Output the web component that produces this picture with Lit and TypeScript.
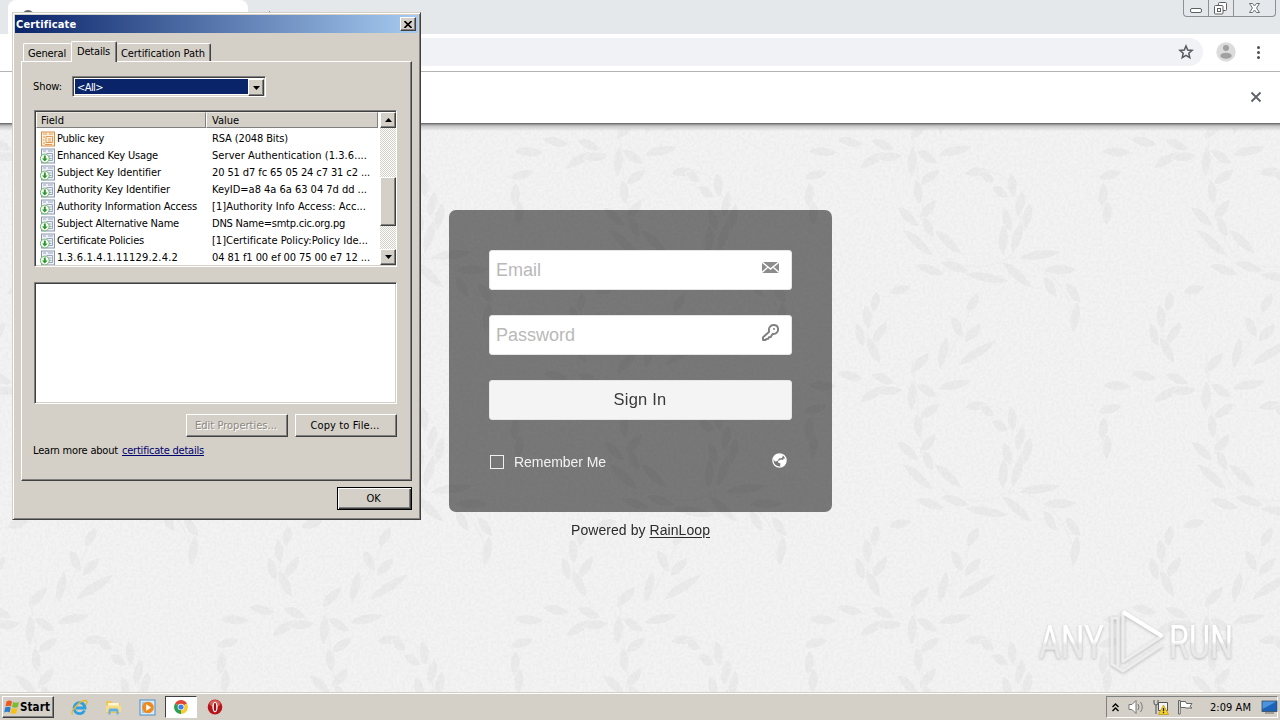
import { LitElement, html, css, svg } from 'lit';
import { customElement, property } from 'lit/decorators.js';

interface Field {
  icon: 'v1' | 'ext';
  name: string;
  nameWidth: number;
  value: string;
  valueWidth: number;
}

const FIELDS: Field[] = [
  { icon: 'v1', name: 'Public key', nameWidth: 47, value: 'RSA (2048 Bits)', valueWidth: 76 },
  { icon: 'ext', name: 'Enhanced Key Usage', nameWidth: 101, value: 'Server Authentication (1.3.6....', valueWidth: 155 },
  { icon: 'ext', name: 'Subject Key Identifier', nameWidth: 104, value: '20 51 d7 fc 65 05 24 c7 31 c2 ...', valueWidth: 158 },
  { icon: 'ext', name: 'Authority Key Identifier', nameWidth: 113, value: 'KeyID=a8 4a 6a 63 04 7d dd ...', valueWidth: 155 },
  { icon: 'ext', name: 'Authority Information Access', nameWidth: 140, value: '[1]Authority Info Access: Acc...', valueWidth: 154 },
  { icon: 'ext', name: 'Subject Alternative Name', nameWidth: 122, value: 'DNS Name=smtp.cic.org.pg', valueWidth: 133 },
  { icon: 'ext', name: 'Certificate Policies', nameWidth: 87, value: '[1]Certificate Policy:Policy Ide...', valueWidth: 156 },
  { icon: 'ext', name: '1.3.6.1.4.1.11129.2.4.2', nameWidth: 121, value: '04 81 f1 00 ef 00 75 00 e7 12 ...', valueWidth: 158 },
];

// x, y, length, angle of every leaf in one wallpaper tile
const LEAVES: number[][] = [
  [10, 18, 28, 10], [33, 36, 32, -35], [43, 21, 26, 20], [50, 33, 26, -10], [72, 38, 32, 90],
  [115, 27, 36, -15], [87, 33, 26, 30], [90, 53, 26, -40], [78, 68, 26, 80], [137, 48, 26, -10],
  [147, 53, 18, 30], [160, 68, 20, 30], [172, 61, 26, 80], [180, 80, 28, 100], [187, 93, 30, 100],
  [167, 96, 26, 70], [163, 116, 32, 90], [177, 113, 36, 105], [68, 93, 30, 40], [88, 86, 28, -55],
  [78, 119, 42, 40], [88, 103, 24, 60], [108, 118, 38, 40], [90, 146, 32, 15], [115, 143, 32, 15],
  [147, 154, 46, 8], [177, 151, 42, 40], [200, 131, 46, -10], [220, 146, 36, -3], [210, 163, 26, 55],
  [233, 169, 26, 50], [235, 193, 32, 95], [27, 193, 26, 80], [35, 178, 22, 95], [20, 211, 26, 70],
  [40, 209, 28, -60], [33, 226, 32, 60], [60, 166, 24, -20], [133, 179, 24, -65], [117, 203, 26, 60],
  [133, 209, 26, -50], [103, 229, 34, 100], [137, 229, 48, -35], [80, 239, 30, -50], [277, 28, 30, 0],
  [270, 51, 26, -20], [263, 71, 26, 90], [267, 89, 26, 90],
];

const TILE_X = [-336, -42, 252, 546, 840, 1134];
const TILE_Y = [-234, 0, 234, 468];

/**
 * Single line of text spaced out to an exact width
 */
@customElement('fit-text')
export class FitText extends LitElement {
  @property({ type: Number }) width = 0;

  static styles = css`
    :host {
      display: inline-block;
      white-space: pre;
    }
  `;

  render() {
    return html`<slot></slot>`;
  }

  firstUpdated() {
    const count = (this.textContent ?? '').length;
    const natural = this.getBoundingClientRect().width;
    if (count && this.width) {
      this.style.letterSpacing = `${(this.width - natural) / count}px`;
    }
  }
}

@customElement('mail-page')
export class MailPage extends LitElement {
  static styles = css`
    :host {
      display: block;
      position: relative;
      overflow: hidden;
      background: #f3f3f3;
      font-family: 'Liberation Sans', Arial, sans-serif;
    }

    .wallpaper {
      position: absolute;
      inset: 0;
    }

    .top-shadow {
      position: absolute;
      inset: 0 0 auto;
      height: 7px;
      background: linear-gradient(#8a8a8a, #c9c9c9 30%, rgba(240, 240, 240, 0));
    }

    .content {
      position: relative;
      display: flex;
      flex-direction: column;
      align-items: center;
      padding: 86px 0 0 1px;
    }

    .card {
      box-sizing: border-box;
      width: 383px;
      height: 302px;
      padding: 40px;
      border-radius: 7px;
      background: rgba(0, 0, 0, 0.505);
      display: flex;
      flex-direction: column;
      gap: 25px;
    }

    .field,
    .submit {
      box-sizing: border-box;
      height: 40px;
      border-radius: 3px;
      background: #fff;
      border: 1px solid #e6e6e6;
      display: flex;
      align-items: center;
      justify-content: space-between;
      padding: 0 12px 0 6px;
      font-size: 18px;
      color: #b9b9b9;
    }

    .field svg {
      margin-top: -5px;
    }

    .submit {
      justify-content: center;
      padding: 0 1px 2px 0;
      background: #f4f4f4;
      font-size: 16.5px;
      color: #3a3a3a;
    }

    .remember {
      display: flex;
      align-items: center;
      margin-top: 9px;
      height: 16px;
      padding: 0 5px 0 1px;
      font-size: 14px;
      color: #f2f2f2;
    }

    .box {
      box-sizing: border-box;
      width: 14px;
      height: 14px;
      border: 1px solid #f0f0f0;
      margin-right: 10px;
    }

    .globe {
      margin: -4px 0 0 auto;
    }

    .powered {
      margin-top: 10px;
      font-size: 14px;
      line-height: 16px;
      color: #2b2b2b;
    }

    .powered u {
      text-underline-offset: 2px;
    }

    .watermark {
      position: absolute;
      right: 38px;
      bottom: 12px;
    }
  `;

  private renderWallpaper() {
    return svg`
      <svg class="wallpaper" width="1280" height="568">
        <defs>
          <filter id="grain" x="0" y="0" width="100%" height="100%">
            <feTurbulence type="fractalNoise" baseFrequency="0.35" numOctaves="3" seed="4" />
            <feColorMatrix values="0 0 0 0 0.5  0 0 0 0 0.5  0 0 0 0 0.5  0.5 0 0 0 -0.18" />
          </filter>
          <g id="tile">
            <path d="M72 0c4 30 6 80 20 118 14 26 50 32 76 16 20-20 14-52 4-72-8-12-20-16-34-14M168 134c30 0 56 20 66 60M34 234c-8-20-10-40 2-58M108 234c8-20 22-40 24-56" fill="none" stroke="#ebebeb" stroke-width="1.2" />
            ${LEAVES.map(
              ([x, y, l, a]) => svg`
                <path transform="translate(${x} ${y}) rotate(${a})" d="M${-l / 2} 0Q${-l / 6} -11 ${l / 2} 0Q${l / 8} 10 ${-l / 2} 0Z" fill="#e6e6e6" stroke="#f8f8f8" stroke-width="0.7" />`
            )}
          </g>
        </defs>
        <g opacity="0.6">
          ${TILE_X.map((x) => TILE_Y.map((y) => svg`<use href="#tile" x=${x} y=${y} />`))}
        </g>
        <rect width="1280" height="568" filter="url(#grain)" opacity="0.45" />
      </svg>
    `;
  }

  private renderWatermark() {
    return html`
      <svg class="watermark" width="208" height="76" viewBox="0 0 208 76">
        <defs>
          <linearGradient id="shine" x1="0" y1="0" x2="0" y2="1">
            <stop offset="0.48" stop-color="#fff" />
            <stop offset="0.55" stop-color="#e9e9e9" />
          </linearGradient>
          <filter id="soft" x="-10%" y="-10%" width="120%" height="120%">
            <feDropShadow dx="0" dy="1" stdDeviation="1.6" flood-color="#888" flood-opacity="0.55" />
          </filter>
        </defs>
        <g filter="url(#soft)">
          <g font-family="Roboto, sans-serif" font-size="47" fill="url(#shine)">
            <text transform="translate(5 54) scale(0.71 1)">ANY</text>
            <text transform="translate(135 54) scale(0.69 1)">RUN</text>
          </g>
          <g fill="none" stroke="#ededed" stroke-width="3">
            <path d="M89 58V8L128 32L88 58" />
            <path d="M84 62V14H78V60L89 67L128 41" />
            <path d="M89 8L128 32" stroke="#fff" stroke-width="4" />
          </g>
        </g>
      </svg>
    `;
  }

  render() {
    return html`
      ${this.renderWallpaper()}
      <div class="top-shadow"></div>
      <div class="content">
        <div class="card">
          <div class="field">
            <span>Email</span>
            <svg width="17" height="17" viewBox="0 0 17 17">
              <path d="M0 3h17v11H0z" fill="#8c8c8c" />
              <path d="M0 3l8.5 7L17 3M0 13.5l6-5.5M17 13.5L11 8" fill="none" stroke="#fff" stroke-width="1.4" />
            </svg>
          </div>
          <div class="field">
            <span>Password</span>
            <svg width="17" height="17" viewBox="0 0 17 17" fill="none" stroke="#808080" stroke-width="1.9">
              <path d="M7.200 7.800C6 4 8.500 1 11.500 1c2.800 0 4.600 1.800 4.600 4.300 0 3.200-2.800 5.200-5.300 4.500L9.600 11.300l-.8 1.700-2 .2-.5 1.600-1.800.2-1 1H1v-2.700z" stroke-linejoin="round" />
              <circle cx="12" cy="5" r="1" fill="#808080" stroke="none" />
            </svg>
          </div>
          <div class="submit"><fit-text width="53">Sign In</fit-text></div>
          <div class="remember">
            <span class="box"></span>
            <fit-text width="92">Remember Me</fit-text>
            <svg class="globe" width="15" height="15" viewBox="0 0 15 15">
              <circle cx="7.500" cy="7.500" r="6.600" fill="none" stroke="#fff" stroke-width="1.300" />
              <path d="M4 1.500L8 1l3 1.500-1 2.500-3 .5L5.500 8 3 8.500 1 6z" fill="#fff" />
              <path d="M6 8l3-1.500 2 .5 1-2 2 2-.5 3.500-3 3L8 13l.5-2.500L6 9.500z" fill="#fff" />
            </svg>
          </div>
        </div>
        <div class="powered"><fit-text width="139">Powered by <u>RainLoop</u></fit-text></div>
      </div>
      ${this.renderWatermark()}
    `;
  }
}

@customElement('browser-chrome')
export class BrowserChrome extends LitElement {
  static styles = css`
    :host {
      display: block;
    }

    .tab-strip {
      display: flex;
      justify-content: space-between;
      height: 34px;
      background: #e5e8eb;
      padding: 0 4px 0 8px;
    }

    .tab {
      box-sizing: border-box;
      width: 240px;
      height: 34px;
      border-radius: 8px 8px 0 0;
      background: #fff;
      padding: 10px 0 0 14px;
    }

    .favicon {
      width: 12px;
      height: 12px;
      border-radius: 6px;
      background: #5f6368;
    }

    .plus {
      width: 1px;
      height: 12px;
      margin: 11px auto 0 21px;
      background: #8b8f94;
    }

    .controls {
      box-sizing: border-box;
      display: flex;
      width: 93px;
      height: 17px;
      border: 1px solid #8d9094;
      border-top: none;
      border-radius: 0 0 4px 4px;
    }

    .toolbar {
      box-sizing: border-box;
      display: flex;
      align-items: center;
      height: 38px;
      background: #fff;
      border-bottom: 1px solid #b4b4b4;
      padding: 0 13px 1px 20px;
    }

    .omnibox {
      display: flex;
      flex: 1;
      align-items: center;
      justify-content: flex-end;
      height: 28px;
      border-radius: 14px;
      background: #f0f2f5;
      padding-right: 9px;
      margin-right: 13px;
    }

    .avatar {
      margin-right: 15px;
    }

    .infobar {
      box-sizing: border-box;
      display: flex;
      align-items: center;
      justify-content: flex-end;
      height: 52px;
      background: #fff;
      border-bottom: 1px solid #707070;
      padding: 0 18px 1px 0;
    }
  `;

  render() {
    return html`
      <div class="tab-strip">
        <div class="tab"><div class="favicon"></div></div>
        <div class="plus"></div>
        <div class="controls">
          <svg width="91" height="16" viewBox="0 0 91 16" fill="none" stroke="#5c6063">
            <path d="M24.500 0v16M49.500 0v16" stroke="#8d9094" />
            <rect x="6.500" y="8.500" width="11" height="4" rx="1.500" fill="#fff" />
            <rect x="34.500" y="2.500" width="8" height="8" rx="1" fill="#fff" />
            <rect x="30.500" y="5.500" width="8.500" height="8.500" rx="1" fill="#fff" />
            <rect x="33.500" y="8.500" width="3" height="3" />
            <path d="M65.500 3.500h3l2 2.500 2-2.500h3L72.500 8l3 4.500h-3l-2-2.500-2 2.500h-3l3-4.500z" fill="#fff" stroke-width="0.900" />
          </svg>
        </div>
      </div>
      <div class="toolbar">
        <div class="omnibox">
          <svg width="16" height="16" viewBox="0 0 16 16" fill="none" stroke="#55595e" stroke-width="1.500">
            <path d="M8 2l1.700 4 4.400.4-3.300 2.900 1 4.300L8 11.300l-3.800 2.300 1-4.300L1.900 6.400 6.300 6z" />
          </svg>
        </div>
        <svg class="avatar" width="20" height="20" viewBox="0 0 20 20">
          <circle cx="10" cy="10" r="9.700" fill="#dcdcdc" />
          <circle cx="10" cy="6" r="3" fill="#a0a0a0" />
          <ellipse cx="10" cy="13.700" rx="5.700" ry="3" fill="#a0a0a0" />
        </svg>
        <svg width="16" height="16" viewBox="0 0 16 16" fill="#4c5054">
          <circle cx="7.500" cy="3.500" r="1.500" />
          <circle cx="7.500" cy="8.500" r="1.500" />
          <circle cx="7.500" cy="13.500" r="1.500" />
        </svg>
      </div>
      <div class="infobar">
        <svg width="12" height="12" viewBox="0 0 12 12" stroke="#5f6368" stroke-width="1.900">
          <path d="M1.500 1.500l9 9M10.500 1.500l-9 9" />
        </svg>
      </div>
    `;
  }
}

@customElement('certificate-dialog')
export class CertificateDialog extends LitElement {
  static styles = css`
    :host {
      box-sizing: border-box;
      display: flex;
      flex-direction: column;
      width: 409px;
      height: 508px;
      padding: 1px;
      border: 1px solid;
      border-color: #d4d0c8 #404040 #404040 #d4d0c8;
      box-shadow: inset 1px 1px #fff, inset -1px -1px #808080;
      background: #d4d0c8;
      font-family: 'DejaVu Sans Condensed', 'DejaVu Sans', sans-serif;
      font-size: 11px;
      line-height: 13px;
      color: #000;
    }

    .title {
      display: flex;
      align-items: center;
      justify-content: space-between;
      height: 18px;
      margin: 1px 1px 0;
      padding: 0 2px 0 1px;
      background: linear-gradient(90deg, #0a246a, #a6caf0);
      color: #fff;
      font-weight: bold;
      font-size: 11px;
    }

    .close,
    .arrow,
    .button,
    .thumb {
      box-sizing: border-box;
      display: flex;
      align-items: center;
      justify-content: center;
      background: #d4d0c8;
      border: 1px solid;
      border-color: #fff #404040 #404040 #fff;
      box-shadow: inset -1px -1px #808080;
    }

    .close {
      width: 16px;
      height: 14px;
    }

    .tabs {
      display: flex;
      align-items: flex-end;
      height: 21px;
      margin: 7px 0 0 9px;
    }

    .tab {
      box-sizing: border-box;
      height: 18px;
      padding: 3px 4px 0;
      border: 1px solid #fff;
      border-bottom: none;
      border-radius: 2px 2px 0 0;
    }

    .general {
      width: 48px;
      border-right: none;
    }

    .details {
      width: 46px;
      height: 21px;
      margin-bottom: -1px;
      border-right: 1px solid #404040;
      box-shadow: inset -1px 0 #808080;
      background: #d4d0c8;
      z-index: 1;
      padding-left: 5px;
    }

    .path {
      width: 94px;
      border-left: none;
      border-right: 1px solid #404040;
      box-shadow: inset -1px 0 #808080;
    }

    .panel {
      box-sizing: border-box;
      width: 391px;
      height: 420px;
      margin-left: 7px;
      border: 1px solid;
      border-color: #fff #404040 #404040 #fff;
      box-shadow: inset -1px -1px #808080;
      padding: 14px 14px 0 12px;
    }

    .show {
      display: flex;
      align-items: center;
      height: 21px;
      margin-left: -1px;
    }

    .sunken {
      box-sizing: border-box;
      border: 1px solid;
      border-color: #808080 #fff #fff #808080;
      box-shadow: inset 1px 1px #404040, inset -1px -1px #d4d0c8;
      background: #fff;
    }

    .select {
      display: flex;
      width: 194px;
      height: 21px;
      padding: 2px 1px 2px 2px;
      margin-left: 10px;
    }

    .selected {
      flex: 1;
      padding: 2px 0 0 2px;
      background: #0a246a;
      color: #fff;
    }

    .select .arrow {
      width: 16px;
      height: 17px;
    }

    .list {
      display: flex;
      width: 363px;
      height: 157px;
      margin-top: 13px;
      padding: 1px 0 1px 1px;
      overflow: hidden;
    }

    .columns {
      width: 342px;
      flex: none;
      overflow: hidden;
    }

    .head {
      display: flex;
      height: 16px;
    }

    .head div {
      box-sizing: border-box;
      padding: 1px 0 0 4px;
      background: #d4d0c8;
      border: 1px solid;
      border-color: #e8e6e0 #808080 #808080 #fff;
      width: 170px;
      line-height: 14px;
    }

    .head div + div {
      width: 172px;
      padding-left: 5px;
    }

    .row {
      display: flex;
      align-items: center;
      height: 17px;
      padding-left: 4px;
    }

    .row:nth-child(2) {
      margin-top: 2px;
    }

    .name {
      width: 155px;
      padding-left: 1px;
    }

    .scroll {
      display: flex;
      flex-direction: column;
      flex: none;
      width: 16px;
      margin: 0 0 0 auto;
      background: repeating-conic-gradient(#fff 0 25%, #d4d0c8 0 50%) 0 0 / 2px 2px;
    }

    .scroll .arrow {
      width: 16px;
      height: 16px;
    }

    .thumb {
      height: 49px;
      margin: 49px 0 auto;
    }

    .text {
      width: 363px;
      height: 122px;
      margin-top: 15px;
    }

    .buttons {
      display: flex;
      justify-content: flex-end;
      gap: 7px;
      margin-top: 10px;
    }

    .button {
      width: 102px;
      height: 23px;
      padding-right: 2px;
    }

    .disabled {
      color: #8c8880;
      text-shadow: 1px 1px #fff;
    }

    .more {
      margin: 7px 0 0 -1px;
      display: flex;
      gap: 4px;
    }

    .more fit-text + fit-text {
      color: #00006e;
      text-decoration: underline;
    }

    .ok {
      width: 75px;
      margin: 6px 7px 0 auto;
      border-color: #000;
      box-shadow: inset 1px 1px #fff, inset -1px -1px #404040, inset -2px -2px #808080;
    }
  `;

  private renderArrow(down: boolean) {
    return html`
      <svg width="7" height="4" viewBox="0 0 7 4">
        <path d=${down ? 'M0 0h7L3.500 4z' : 'M0 4h7L3.500 0z'} />
      </svg>
    `;
  }

  private renderIcon(kind: Field['icon']) {
    if (kind === 'v1') {
      return html`
        <svg width="16" height="16" viewBox="0 0 16 16">
          <rect x="1.500" y="1" width="13" height="14" fill="#fdeed8" stroke="#d98a45" />
          <path d="M3 3h4M9 3h4M3 6h2M6 5.500h6.500v6H6zM8 8h3M8 10h3M3 9h1.500M3 12h2M5 13.500h7" fill="none" stroke="#df9a58" />
        </svg>
      `;
    }
    return html`
      <svg width="16" height="16" viewBox="0 0 16 16">
        <rect x="1.500" y="1" width="13" height="14" fill="#eef1f8" stroke="#8b97ad" />
        <path d="M3 3h3M8 3h5M6.500 5.500h6v7h-6M8 8h3.500M8 10.500h3.500" fill="none" stroke="#9ba6be" />
        <circle cx="4.800" cy="10.500" r="4.400" fill="#fff" stroke="#5fae5c" stroke-width="0.900" />
        <path d="M3.800 7.500h2v3h1.900l-2.900 3-2.900-3h1.900z" fill="#2c9a2a" />
      </svg>
    `;
  }

  render() {
    return html`
      <div class="title">
        <fit-text width="60">Certificate</fit-text>
        <div class="close">
          <svg width="8" height="7" viewBox="0 0 8 7" stroke="#000" stroke-width="1.600">
            <path d="M0.500 0l7 7M7.500 0l-7 7" />
          </svg>
        </div>
      </div>
      <div class="tabs">
        <div class="tab general"><fit-text width="38">General</fit-text></div>
        <div class="tab details"><fit-text width="33">Details</fit-text></div>
        <div class="tab path"><fit-text width="84">Certification Path</fit-text></div>
      </div>
      <div class="panel">
        <div class="show">
          <fit-text width="29">Show:</fit-text>
          <div class="sunken select">
            <div class="selected"><fit-text width="26">&lt;All&gt;</fit-text></div>
            <div class="arrow">${this.renderArrow(true)}</div>
          </div>
        </div>
        <div class="sunken list">
          <div class="columns">
            <div class="head">
              <div><fit-text width="23">Field</fit-text></div>
              <div><fit-text width="27">Value</fit-text></div>
            </div>
            ${FIELDS.map(
              (f) => html`
                <div class="row">
                  ${this.renderIcon(f.icon)}
                  <div class="name"><fit-text width=${f.nameWidth}>${f.name}</fit-text></div>
                  <fit-text width=${f.valueWidth}>${f.value}</fit-text>
                </div>
              `
            )}
          </div>
          <div class="scroll">
            <div class="arrow">${this.renderArrow(false)}</div>
            <div class="thumb"></div>
            <div class="arrow">${this.renderArrow(true)}</div>
          </div>
        </div>
        <div class="sunken text"></div>
        <div class="buttons">
          <div class="button disabled"><fit-text width="82">Edit Properties...</fit-text></div>
          <div class="button"><fit-text width="69">Copy to File...</fit-text></div>
        </div>
        <div class="more">
          <fit-text width="85">Learn more about</fit-text>
          <fit-text width="82">certificate details</fit-text>
        </div>
      </div>
      <div class="button ok"><fit-text width="14">OK</fit-text></div>
    `;
  }
}

@customElement('task-bar')
export class TaskBar extends LitElement {
  static styles = css`
    :host {
      box-sizing: border-box;
      display: flex;
      align-items: center;
      height: 28px;
      padding: 2px 2px 0 2px;
      background: #d4d0c8;
      box-shadow: inset 0 1px #d4d0c8, inset 0 2px #fff;
      font-family: 'DejaVu Sans Condensed', 'DejaVu Sans', sans-serif;
      font-size: 11px;
      color: #000;
    }

    .start {
      box-sizing: border-box;
      display: flex;
      align-items: center;
      width: 52px;
      height: 22px;
      padding-left: 1px;
      border: 1px solid;
      border-color: #fff #404040 #404040 #fff;
      box-shadow: inset -1px -1px #808080;
      font-weight: bold;
      font-size: 11.5px;
    }

    .launch {
      display: flex;
      align-items: center;
      margin-left: 8px;
    }

    .item {
      box-sizing: border-box;
      display: flex;
      align-items: center;
      justify-content: center;
      width: 34px;
      height: 22px;
    }

    .active {
      width: 32px;
      margin: 0 1px;
      background: #fff;
      border: 1px solid;
      border-color: #404040 #fff #fff #404040;
    }

    .tray {
      box-sizing: border-box;
      display: flex;
      align-items: center;
      gap: 8px;
      width: 172px;
      height: 22px;
      margin-left: auto;
      padding: 0 0 0 5px;
      border: 1px solid;
      border-color: #808080 #fff #fff #808080;
    }

    .tray svg {
      flex: none;
    }

    .speaker {
      margin-left: 1px;
    }

    .clock {
      margin: 0 2px 0 9px;
    }
  `;

  render() {
    return html`
      <div class="start">
        <svg width="16" height="16" viewBox="0 0 16 16">
          <path d="M2.500 2.500q3-2 5.500 0L7 7.500q-2.500-1.500-5.500 0z" fill="#ea5b21" />
          <path d="M9 3q3 1.500 6 0l-1.200 5q-3 1.500-5.800 0z" fill="#7cbb36" />
          <path d="M1.200 8.500q3-1.500 5.500 0l-1 5q-2.500-1.700-5.500 0z" fill="#2d7ed3" />
          <path d="M7.700 9q3 1.500 5.800 0l-1.200 5q-3 1.700-5.700 0z" fill="#f9c111" />
        </svg>
        <fit-text width="30">Start</fit-text>
      </div>
      <div class="launch">
        <div class="item">
          <svg width="17" height="17" viewBox="0 0 17 17" fill="none">
            <path d="M13.500 11.500A5.500 5.500 0 1 1 14 9H5" stroke="#2f9fe0" stroke-width="2.800" />
            <path d="M1.500 15.500C-1 12 9 1.500 14.500 1.500c2 0 2 2 .5 4.500" stroke="#e9b72c" stroke-width="1.300" />
          </svg>
        </div>
        <div class="item">
          <svg width="17" height="17" viewBox="0 0 17 17">
            <path d="M1 2h6l1 2h7v10H1z" fill="#edc55a" />
            <path d="M3 4h11v4H3z" fill="#fff6cf" />
            <path d="M1 6.500h15V13H1z" fill="#f5dc86" />
            <path d="M3.500 15.500v-4q0-2 2-2h6q2 0 2 2v4h-2v-3h-6v3z" fill="#62aee0" />
          </svg>
        </div>
        <div class="item">
          <svg width="17" height="17" viewBox="0 0 17 17">
            <rect x="1" y="1" width="15" height="15" fill="#d8eaf8" stroke="#4b8fc8" />
            <rect x="3" y="3" width="9" height="11" fill="#9cc8ea" />
            <circle cx="9" cy="8.500" r="5.800" fill="#f08a1d" />
            <path d="M7.200 5.300v6.400l5-3.200z" fill="#fff" />
          </svg>
        </div>
        <div class="item active">
          <svg width="14" height="14" viewBox="0 0 14 14">
            <path d="M7 7L1 3.500A7 7 0 0 1 13 3.500z" fill="#df4637" />
            <path d="M7 7L13 3.500A7 7 0 0 1 7 14z" fill="#f8cb2e" />
            <path d="M7 7v7A7 7 0 0 1 1 3.500z" fill="#2e9e52" />
            <circle cx="7" cy="7" r="3.300" fill="#fff" />
            <circle cx="7" cy="7" r="2.600" fill="#3f7ee8" />
          </svg>
        </div>
        <div class="item">
          <svg width="16" height="16" viewBox="0 0 16 16">
            <ellipse cx="8" cy="8" rx="7.300" ry="7.600" fill="#b8141b" />
            <ellipse cx="8" cy="4.500" rx="5.500" ry="3.500" fill="#d85a55" />
            <ellipse cx="8" cy="8" rx="2.600" ry="5.300" fill="#fff" />
            <ellipse cx="8" cy="8" rx="1.200" ry="4.300" fill="#9c1015" />
          </svg>
        </div>
      </div>
      <div class="tray">
        <svg width="7" height="9" viewBox="0 0 7 9" fill="none" stroke="#000" stroke-width="1.400">
          <path d="M0.500 4l3-3 3 3M0.500 8l3-3 3 3" />
        </svg>
        <svg class="speaker" width="17" height="16" viewBox="0 0 17 16" fill="none" stroke="#777">
          <path d="M1 5.500h3l4-4v13l-4-4H1z" fill="#fff" />
          <path d="M10 5q2 3 0 6M12.500 3q3.500 5 0 10" />
        </svg>
        <svg width="16" height="16" viewBox="0 0 16 16">
          <path d="M5.500 3.500h9v8h-9z" fill="#f3f3f3" stroke="#555" />
          <path d="M1 1v3q0 2 2 2v9M5 1v3q0 2-2 2" fill="none" stroke="#555" />
          <path d="M10.500 6l5 9.500h-10z" fill="#f7d21e" stroke="#b8930c" stroke-width="0.700" />
          <path d="M10.500 9v3.200M10.500 13v1.300" stroke="#222" stroke-width="1.300" />
        </svg>
        <svg width="16" height="16" viewBox="0 0 16 16" fill="#fff" stroke="#666">
          <path d="M1.500 1.500h1.700v13.500H1.500zM3.500 2.500h5l1 2h5.500l-2 3 2 1.500H9L8 8.500H3.500z" />
        </svg>
        <fit-text class="clock" width="41">2:09 AM</fit-text>
        <svg width="17" height="16" viewBox="0 0 17 16">
          <rect x="1" y="2" width="15" height="10.500" fill="#1b62b8" stroke="#3a4a5c" stroke-width="0.800" />
          <path d="M1.500 2.500h14L1.500 10z" fill="#4c93dc" />
          <path d="M4 14h9" stroke="#888" stroke-width="1.400" />
        </svg>
      </div>
    `;
  }
}

@customElement('app-root')
export class AppRoot extends LitElement {
  static styles = css`
    :host {
      display: flex;
      flex-direction: column;
      position: relative;
      width: 1280px;
      height: 720px;
      overflow: hidden;
    }

    mail-page {
      flex: 1;
    }

    .window {
      position: absolute;
      left: 12px;
      top: 12px;
    }
  `;

  render() {
    return html`
      <browser-chrome></browser-chrome>
      <mail-page></mail-page>
      <task-bar></task-bar>
      <certificate-dialog class="window"></certificate-dialog>
    `;
  }
}

declare global {
  interface HTMLElementTagNameMap {
    'app-root': AppRoot;
    'browser-chrome': BrowserChrome;
    'certificate-dialog': CertificateDialog;
    'fit-text': FitText;
    'mail-page': MailPage;
    'task-bar': TaskBar;
  }
}
